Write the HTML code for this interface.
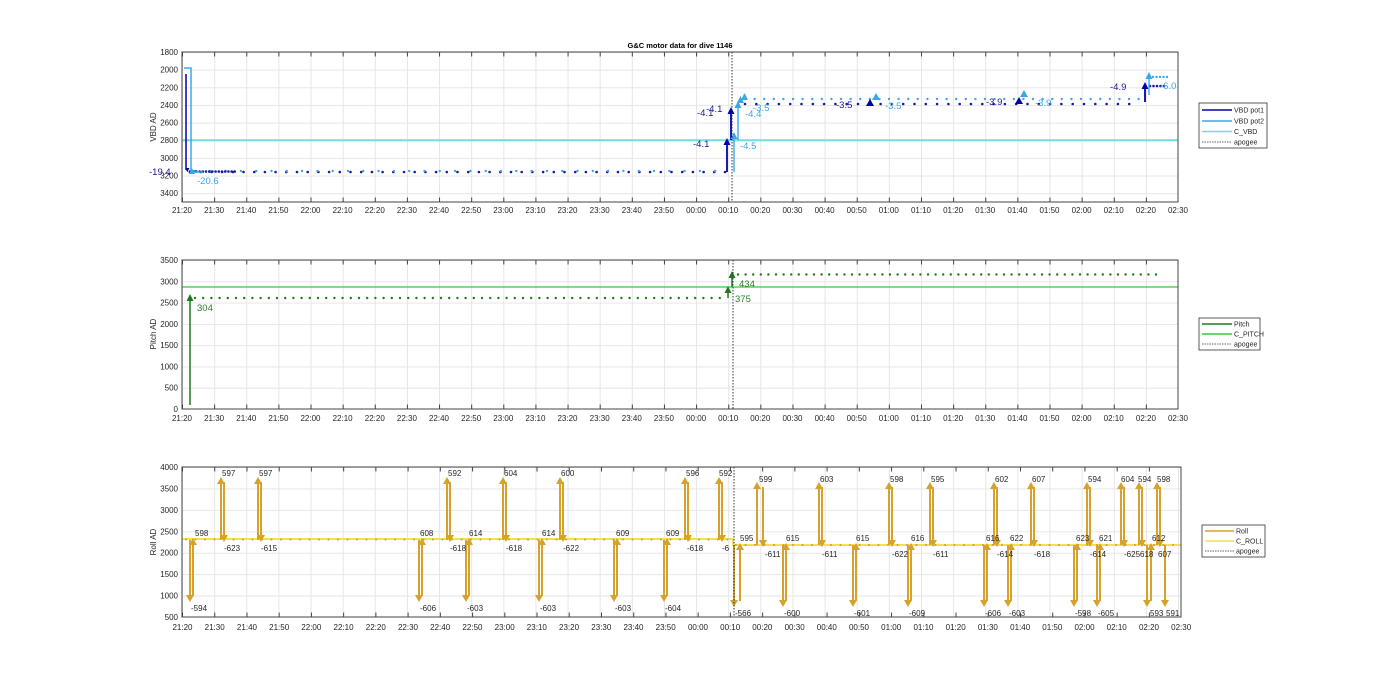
<!DOCTYPE html>
<html><head><meta charset="utf-8"><style>
html,body{margin:0;padding:0;background:#fff}
svg{display:block}
text{font-family:"Liberation Sans",sans-serif;font-size:8px;fill:#262626}
.xl text{text-anchor:middle}
.yl text{text-anchor:end}
.lg text{font-size:7px}
</style></head><body>
<svg width="1400" height="693" viewBox="0 0 1400 693" xmlns="http://www.w3.org/2000/svg">
<defs>
<pattern id="gx" x="182" y="0" width="32.13" height="10" patternUnits="userSpaceOnUse"><line x1="0.5" y1="0" x2="0.5" y2="10" stroke="#e6e6e6" stroke-width="1"/></pattern>
<pattern id="gy1" x="0" y="52" width="10" height="17.65" patternUnits="userSpaceOnUse"><line x1="0" y1="0.5" x2="10" y2="0.5" stroke="#e6e6e6"/></pattern>
<pattern id="gy2" x="0" y="260" width="10" height="21.29" patternUnits="userSpaceOnUse"><line x1="0" y1="0.5" x2="10" y2="0.5" stroke="#e6e6e6"/></pattern>
<pattern id="gy3" x="0" y="467" width="10" height="21.43" patternUnits="userSpaceOnUse"><line x1="0" y1="0.5" x2="10" y2="0.5" stroke="#e6e6e6"/></pattern>
<marker id="mb" viewBox="0 0 10 10" refX="5" refY="8" markerWidth="3" markerHeight="3.5" orient="auto"><path d="M0,0 L10,5 L0,10Z" fill="#0000B0"/></marker>
</defs>

<text x="680" y="48" text-anchor="middle" style="font-weight:bold;font-size:7.5px;fill:#000">G&amp;C motor data for dive 1146</text>

<!-- ========== AXES 1 VBD ========== -->
<rect x="182" y="52" width="996" height="150" fill="#fff"/>
<rect x="182" y="52" width="996" height="150" fill="url(#gx)"/>
<rect x="182" y="52" width="996" height="150" fill="url(#gy1)"/>
<line x1="182" y1="140.2" x2="1178" y2="140.2" stroke="#6EDDE0" stroke-width="2"/>
<path d="M190 172 L726 172" stroke="#1a1aa0" stroke-width="2.6" stroke-linecap="round" stroke-dasharray="0 10.7"/>
<path d="M195 171 L726 171" stroke="#3aa8e8" stroke-width="2.4" stroke-linecap="round" stroke-dasharray="0 15.3"/>
<path d="M190 171.5 L235 171.5" stroke="#1a1aa0" stroke-width="2.6" stroke-linecap="round" stroke-dasharray="0 3.2"/>
<path d="M745 104 L1140 104" stroke="#1a1aa0" stroke-width="2.6" stroke-linecap="round" stroke-dasharray="0 11.3"/>
<path d="M745 99 L1140 99" stroke="#3aa8e8" stroke-width="2.4" stroke-linecap="round" stroke-dasharray="0 9.6"/>
<path d="M1150 86 L1165 86" stroke="#1a1aa0" stroke-width="2.6" stroke-linecap="round" stroke-dasharray="0 3.5"/>
<path d="M1153 77 L1170 77" stroke="#3aa8e8" stroke-width="2.4" stroke-linecap="round" stroke-dasharray="0 3.5"/>
<line x1="186" y1="74" x2="186" y2="170" stroke="#0000B0" stroke-width="1.5" marker-end="url(#mb)"/>
<polyline points="184,68 191,68 191,172 203,172" fill="none" stroke="#3aa8e8" stroke-width="1.5"/>
<path d="M189,174 l3,-6 l3,6z" fill="#3aa8e8"/>
<text x="149" y="175" style="fill:#1a1a9a;font-size:9.5px">-19.4</text>
<text x="197" y="184" style="fill:#3aa8e8;font-size:9.5px">-20.6</text>
<line x1="727" y1="172" x2="727" y2="144" stroke="#0000B0" stroke-width="1.8"/><path d="M723.5,145 l3.5,-7 l3.5,7z" fill="#0000B0"/>
<line x1="731" y1="140" x2="731" y2="113" stroke="#0000B0" stroke-width="1.8"/><path d="M727.5,114 l3.5,-7 l3.5,7z" fill="#0000B0"/>
<line x1="734" y1="172" x2="734" y2="138" stroke="#3aa8e8" stroke-width="1.4"/><path d="M730.5,139 l3.5,-7 l3.5,7z" fill="#3aa8e8"/>
<line x1="738" y1="140" x2="738" y2="107" stroke="#3aa8e8" stroke-width="1.4"/><path d="M734.5,108 l3.5,-7 l3.5,7z" fill="#3aa8e8"/>
<path d="M737,103 l3.5,-7 l3.5,7z" fill="#3aa8e8"/><path d="M741,100 l3.5,-7 l3.5,7z" fill="#3aa8e8"/>
<text x="693" y="147" style="fill:#1a1a9a;font-size:9.5px">-4.1</text>
<text x="697" y="116" style="fill:#1a1a9a;font-size:9.5px">-4.1</text>
<text x="706" y="112" style="fill:#1a1a9a;font-size:9.5px">-4.1</text>
<text x="740" y="149" style="fill:#3aa8e8;font-size:9.5px">-4.5</text>
<text x="745" y="117" style="fill:#3aa8e8;font-size:9.5px">-4.4</text>
<text x="753" y="111" style="fill:#3aa8e8;font-size:9.5px">-3.5</text>
<text x="836" y="108" style="fill:#1a1a9a;font-size:9.5px">-3.5</text>
<path d="M866,106 l4,-7 l4,7z" fill="#0000B0"/><path d="M872,100 l4,-7 l4,7z" fill="#3aa8e8"/>
<text x="885" y="109" style="fill:#3aa8e8;font-size:9.5px">-3.5</text>
<text x="986" y="105" style="fill:#1a1a9a;font-size:9.5px">-3.9</text>
<path d="M1015,104 l4,-7 l4,7z" fill="#0000B0"/><path d="M1020,97 l4,-7 l4,7z" fill="#3aa8e8"/>
<text x="1035" y="106" style="fill:#3aa8e8;font-size:9.5px">-3.9</text>
<text x="1110" y="90" style="fill:#1a1a9a;font-size:9.5px">-4.9</text>
<line x1="1145" y1="102" x2="1145" y2="88" stroke="#0000B0" stroke-width="1.8"/><path d="M1141.5,89 l3.5,-7 l3.5,7z" fill="#0000B0"/>
<line x1="1149" y1="95" x2="1149" y2="78" stroke="#3aa8e8" stroke-width="1.4"/><path d="M1145.5,79 l3.5,-7 l3.5,7z" fill="#3aa8e8"/>
<text x="1160" y="89" style="fill:#3aa8e8;font-size:9.5px">-6.0</text>
<line x1="732" y1="52" x2="732" y2="202" stroke="#333" stroke-width="1" stroke-dasharray="1.5 1.5"/>
<line x1="182" y1="54" x2="1178" y2="54" stroke="#444" stroke-width="5" stroke-dasharray="1 31.13"/>
<line x1="182" y1="200" x2="1178" y2="200" stroke="#444" stroke-width="5" stroke-dasharray="1 31.13"/>
<rect x="182" y="52" width="996" height="150" fill="none" stroke="#444" stroke-width="1"/>
<g class="yl"><text x="178" y="55">1800</text><text x="178" y="72.6">2000</text><text x="178" y="90.3">2200</text><text x="178" y="107.9">2400</text><text x="178" y="125.6">2600</text><text x="178" y="143.2">2800</text><text x="178" y="160.9">3000</text><text x="178" y="178.5">3200</text><text x="178" y="196.2">3400</text></g>
<text transform="translate(156,127) rotate(-90)" text-anchor="middle">VBD AD</text>
<g class="xl" transform="translate(0,213)">
<text x="182">21:20</text><text x="214.1">21:30</text><text x="246.3">21:40</text><text x="278.4">21:50</text><text x="310.5">22:00</text><text x="342.6">22:10</text><text x="374.8">22:20</text><text x="406.9">22:30</text><text x="439">22:40</text><text x="471.2">22:50</text><text x="503.3">23:00</text><text x="535.4">23:10</text><text x="567.5">23:20</text><text x="599.7">23:30</text><text x="631.8">23:40</text><text x="663.9">23:50</text><text x="696.1">00:00</text><text x="728.2">00:10</text><text x="760.3">00:20</text><text x="792.5">00:30</text><text x="824.6">00:40</text><text x="856.7">00:50</text><text x="888.8">01:00</text><text x="921">01:10</text><text x="953.1">01:20</text><text x="985.2">01:30</text><text x="1017.4">01:40</text><text x="1049.5">01:50</text><text x="1081.6">02:00</text><text x="1113.7">02:10</text><text x="1145.9">02:20</text><text x="1178">02:30</text></g>
<g class="lg"><rect x="1199" y="103" width="68" height="45" fill="#fff" stroke="#333" stroke-width="0.8"/>
<line x1="1202" y1="110" x2="1232" y2="110" stroke="#0000B0" stroke-width="1.5"/><text x="1234" y="112.5">VBD pot1</text>
<line x1="1202" y1="121" x2="1232" y2="121" stroke="#3aa8e8" stroke-width="1.5"/><text x="1234" y="123.5">VBD pot2</text>
<line x1="1202" y1="131.5" x2="1232" y2="131.5" stroke="#6EDDE0" stroke-width="1.5"/><text x="1234" y="134">C_VBD</text>
<line x1="1202" y1="142" x2="1232" y2="142" stroke="#333" stroke-width="0.8" stroke-dasharray="1.5 1"/><text x="1234" y="144.5">apogee</text></g>

<!-- ========== AXES 2 PITCH ========== -->
<rect x="182" y="260" width="996" height="149" fill="url(#gx)"/>
<rect x="182" y="260" width="996" height="149" fill="url(#gy2)"/>
<line x1="182" y1="287" x2="1178" y2="287" stroke="#33CC33" stroke-width="1.2"/>
<path d="M195 298 L725 298" stroke="#1f7a1f" stroke-width="2.4" stroke-linecap="round" stroke-dasharray="0 8.2"/>
<path d="M738 274.5 L1163 274.5" stroke="#1f7a1f" stroke-width="2.4" stroke-linecap="round" stroke-dasharray="0 7.6"/>
<line x1="190" y1="405" x2="190" y2="300" stroke="#1f7a1f" stroke-width="1.5"/><path d="M186.5,301 l3.5,-7 l3.5,7z" fill="#1f7a1f"/>
<text x="197" y="311" style="fill:#2a7a2a;font-size:9.5px">304</text>
<line x1="728" y1="298" x2="728" y2="291" stroke="#1f7a1f" stroke-width="1.5"/><path d="M724.5,293 l3.5,-7 l3.5,7z" fill="#1f7a1f"/>
<line x1="732" y1="287" x2="732" y2="277" stroke="#1f7a1f" stroke-width="1.5"/><path d="M728.5,278 l3.5,-7 l3.5,7z" fill="#1f7a1f"/>
<text x="735" y="302" style="fill:#2a7a2a;font-size:9.5px">375</text>
<text x="739" y="287" style="fill:#2a7a2a;font-size:9.5px">434</text>
<line x1="733" y1="260" x2="733" y2="409" stroke="#333" stroke-width="1" stroke-dasharray="1.5 1.5"/>
<line x1="182" y1="262" x2="1178" y2="262" stroke="#444" stroke-width="5" stroke-dasharray="1 31.13"/>
<line x1="182" y1="407" x2="1178" y2="407" stroke="#444" stroke-width="5" stroke-dasharray="1 31.13"/>
<rect x="182" y="260" width="996" height="149" fill="none" stroke="#444" stroke-width="1"/>
<g class="yl"><text x="178" y="263">3500</text><text x="178" y="284.3">3000</text><text x="178" y="305.6">2500</text><text x="178" y="326.9">2000</text><text x="178" y="348.1">1500</text><text x="178" y="369.4">1000</text><text x="178" y="390.7">500</text><text x="178" y="412">0</text></g>
<text transform="translate(156,334) rotate(-90)" text-anchor="middle">Pitch AD</text>
<g class="xl" transform="translate(0,421)">
<text x="182">21:20</text><text x="214.1">21:30</text><text x="246.3">21:40</text><text x="278.4">21:50</text><text x="310.5">22:00</text><text x="342.6">22:10</text><text x="374.8">22:20</text><text x="406.9">22:30</text><text x="439">22:40</text><text x="471.2">22:50</text><text x="503.3">23:00</text><text x="535.4">23:10</text><text x="567.5">23:20</text><text x="599.7">23:30</text><text x="631.8">23:40</text><text x="663.9">23:50</text><text x="696.1">00:00</text><text x="728.2">00:10</text><text x="760.3">00:20</text><text x="792.5">00:30</text><text x="824.6">00:40</text><text x="856.7">00:50</text><text x="888.8">01:00</text><text x="921">01:10</text><text x="953.1">01:20</text><text x="985.2">01:30</text><text x="1017.4">01:40</text><text x="1049.5">01:50</text><text x="1081.6">02:00</text><text x="1113.7">02:10</text><text x="1145.9">02:20</text><text x="1178">02:30</text></g>
<g class="lg"><rect x="1199" y="318" width="61" height="32" fill="#fff" stroke="#333" stroke-width="0.8"/>
<line x1="1202" y1="324" x2="1232" y2="324" stroke="#1f7a1f" stroke-width="1.5"/><text x="1234" y="326.5">Pitch</text>
<line x1="1202" y1="334" x2="1232" y2="334" stroke="#33CC33" stroke-width="1.5"/><text x="1234" y="336.5">C_PITCH</text>
<line x1="1202" y1="344" x2="1232" y2="344" stroke="#333" stroke-width="0.8" stroke-dasharray="1.5 1"/><text x="1234" y="346.5">apogee</text></g>

<!-- ========== AXES 3 ROLL ========== -->
<rect x="182" y="467" width="999" height="150" fill="url(#gx)"/>
<rect x="182" y="467" width="999" height="150" fill="url(#gy3)"/>
<polyline points="182,539 733,539 733,545 1181,545" fill="none" stroke="#F2E24A" stroke-width="2"/>
<path d="M186 539.5 L730 539.5" stroke="#C8A040" stroke-width="2" stroke-linecap="round" stroke-dasharray="0 9.5"/>
<path d="M736 545 L1178 545" stroke="#C8A040" stroke-width="2" stroke-linecap="round" stroke-dasharray="0 9.5"/>
<g stroke="#D6A22A" stroke-width="2" fill="none">
<path d="M221 540V482M224 482V536"/>
<path d="M258 540V482M261 482V536"/>
<path d="M447 540V482M450 482V536"/>
<path d="M503 540V482M506 482V536"/>
<path d="M560 540V482M563 482V536"/>
<path d="M685 540V482M688 482V536"/>
<path d="M719 540V482M722 482V536"/>
<path d="M757 545V487M763 487V541"/>
<path d="M819 545V487M822 487V541"/>
<path d="M889 545V487M892 487V541"/>
<path d="M930 545V487M933 487V541"/>
<path d="M994 545V487M997 487V541"/>
<path d="M1031 545V487M1034 487V541"/>
<path d="M1087 545V487M1090 487V541"/>
<path d="M1121 545V487M1124 487V541"/>
<path d="M1139 545V487M1142 487V541"/>
<path d="M1157 545V487M1160 487V541"/>
<path d="M190 540V596M193 596V544"/>
<path d="M419 540V596M422 596V544"/>
<path d="M466 540V596M469 596V544"/>
<path d="M539 540V596M542 596V544"/>
<path d="M614 540V596M617 596V544"/>
<path d="M664 540V596M667 596V544"/>
<path d="M734 545V601M740 601V549"/>
<path d="M783 545V601M786 601V549"/>
<path d="M853 545V601M856 601V549"/>
<path d="M908 545V601M911 601V549"/>
<path d="M984 545V601M987 601V549"/>
<path d="M1008 545V601M1011 601V549"/>
<path d="M1074 545V601M1077 601V549"/>
<path d="M1097 545V601M1100 601V549"/>
<path d="M1147 545V601M1151 601V549"/>
<path d="M1165 545V601"/>
</g>
<g fill="#D6A22A">
<path d="M217,484 l4,-7 l4,7zM254,484 l4,-7 l4,7zM443,484 l4,-7 l4,7zM499,484 l4,-7 l4,7zM556,484 l4,-7 l4,7zM681,484 l4,-7 l4,7zM715,484 l4,-7 l4,7zM753,489 l4,-7 l4,7zM815,489 l4,-7 l4,7zM885,489 l4,-7 l4,7zM926,489 l4,-7 l4,7zM990,489 l4,-7 l4,7zM1027,489 l4,-7 l4,7zM1083,489 l4,-7 l4,7zM1117,489 l4,-7 l4,7zM1135,489 l4,-7 l4,7zM1153,489 l4,-7 l4,7z"/>
<path d="M220,535 l4,7 l4,-7zM257,535 l4,7 l4,-7zM446,535 l4,7 l4,-7zM502,535 l4,7 l4,-7zM559,535 l4,7 l4,-7zM684,535 l4,7 l4,-7zM718,535 l4,7 l4,-7zM759,540 l4,7 l4,-7zM818,540 l4,7 l4,-7zM888,540 l4,7 l4,-7zM929,540 l4,7 l4,-7zM993,540 l4,7 l4,-7zM1030,540 l4,7 l4,-7zM1086,540 l4,7 l4,-7zM1120,540 l4,7 l4,-7zM1138,540 l4,7 l4,-7zM1156,540 l4,7 l4,-7z"/>
<path d="M186,595 l4,7 l4,-7zM415,595 l4,7 l4,-7zM462,595 l4,7 l4,-7zM535,595 l4,7 l4,-7zM610,595 l4,7 l4,-7zM660,595 l4,7 l4,-7zM730,600 l4,7 l4,-7zM779,600 l4,7 l4,-7zM849,600 l4,7 l4,-7zM904,600 l4,7 l4,-7zM980,600 l4,7 l4,-7zM1004,600 l4,7 l4,-7zM1070,600 l4,7 l4,-7zM1093,600 l4,7 l4,-7zM1143,600 l4,7 l4,-7zM1161,600 l4,7 l4,-7z"/>
<path d="M189,545 l4,-7 l4,7zM418,545 l4,-7 l4,7zM465,545 l4,-7 l4,7zM538,545 l4,-7 l4,7zM613,545 l4,-7 l4,7zM663,545 l4,-7 l4,7zM736,550 l4,-7 l4,7zM782,550 l4,-7 l4,7zM852,550 l4,-7 l4,7zM907,550 l4,-7 l4,7zM983,550 l4,-7 l4,7zM1007,550 l4,-7 l4,7zM1073,550 l4,-7 l4,7zM1096,550 l4,-7 l4,7zM1147,550 l4,-7 l4,7z"/>
</g>
<g style="font-size:9.5px">
<text x="222" y="476" fill="#D6A22A">597</text><text x="259" y="476" fill="#D6A22A">597</text><text x="448" y="476" fill="#D6A22A">592</text><text x="504" y="476" fill="#D6A22A">604</text><text x="561" y="476" fill="#D6A22A">600</text><text x="686" y="476" fill="#D6A22A">596</text><text x="719" y="476" fill="#D6A22A">592</text><text x="759" y="482" fill="#D6A22A">599</text><text x="820" y="482" fill="#D6A22A">603</text><text x="890" y="482" fill="#D6A22A">598</text><text x="931" y="482" fill="#D6A22A">595</text><text x="995" y="482" fill="#D6A22A">602</text><text x="1032" y="482" fill="#D6A22A">607</text><text x="1088" y="482" fill="#D6A22A">594</text><text x="1121" y="482" fill="#D6A22A">604</text><text x="1138" y="482" fill="#D6A22A">594</text><text x="1157" y="482" fill="#D6A22A">598</text>
<text x="224" y="551" fill="#D6A22A">-623</text><text x="261" y="551" fill="#D6A22A">-615</text><text x="450" y="551" fill="#D6A22A">-618</text><text x="506" y="551" fill="#D6A22A">-618</text><text x="563" y="551" fill="#D6A22A">-622</text><text x="687" y="551" fill="#D6A22A">-618</text><text x="722" y="551" fill="#D6A22A">-6</text><text x="765" y="557" fill="#D6A22A">-611</text><text x="822" y="557" fill="#D6A22A">-611</text><text x="892" y="557" fill="#D6A22A">-622</text><text x="933" y="557" fill="#D6A22A">-611</text><text x="997" y="557" fill="#D6A22A">-614</text><text x="1034" y="557" fill="#D6A22A">-618</text><text x="1090" y="557" fill="#D6A22A">-614</text><text x="1124" y="557" fill="#D6A22A">-625</text><text x="1140" y="557" fill="#D6A22A">618</text><text x="1158" y="557" fill="#D6A22A">607</text>
<text x="191" y="611" fill="#D6A22A">-594</text><text x="420" y="611" fill="#D6A22A">-606</text><text x="467" y="611" fill="#D6A22A">-603</text><text x="540" y="611" fill="#D6A22A">-603</text><text x="615" y="611" fill="#D6A22A">-603</text><text x="665" y="611" fill="#D6A22A">-604</text><text x="735" y="616" fill="#D6A22A">-566</text><text x="784" y="616" fill="#D6A22A">-600</text><text x="854" y="616" fill="#D6A22A">-601</text><text x="909" y="616" fill="#D6A22A">-609</text><text x="985" y="616" fill="#D6A22A">-606</text><text x="1009" y="616" fill="#D6A22A">-603</text><text x="1075" y="616" fill="#D6A22A">-598</text><text x="1098" y="616" fill="#D6A22A">-605</text><text x="1150" y="616" fill="#D6A22A">593</text><text x="1166" y="616" fill="#D6A22A">591</text>
<text x="195" y="536" fill="#D6A22A">598</text><text x="420" y="536" fill="#D6A22A">608</text><text x="469" y="536" fill="#D6A22A">614</text><text x="542" y="536" fill="#D6A22A">614</text><text x="616" y="536" fill="#D6A22A">609</text><text x="666" y="536" fill="#D6A22A">609</text><text x="740" y="541" fill="#D6A22A">595</text><text x="786" y="541" fill="#D6A22A">615</text><text x="856" y="541" fill="#D6A22A">615</text><text x="911" y="541" fill="#D6A22A">616</text><text x="986" y="541" fill="#D6A22A">616</text><text x="1010" y="541" fill="#D6A22A">622</text><text x="1076" y="541" fill="#D6A22A">623</text><text x="1099" y="541" fill="#D6A22A">621</text><text x="1152" y="541" fill="#D6A22A">612</text>
</g>
<line x1="734" y1="467" x2="734" y2="617" stroke="#333" stroke-width="1" stroke-dasharray="1.5 1.5"/>
<line x1="182" y1="469" x2="1181" y2="469" stroke="#444" stroke-width="5" stroke-dasharray="1 31.23"/>
<line x1="182" y1="615" x2="1181" y2="615" stroke="#444" stroke-width="5" stroke-dasharray="1 31.23"/>
<rect x="182" y="467" width="999" height="150" fill="none" stroke="#444" stroke-width="1"/>
<g class="yl"><text x="178" y="470">4000</text><text x="178" y="491.4">3500</text><text x="178" y="512.9">3000</text><text x="178" y="534.3">2500</text><text x="178" y="555.7">2000</text><text x="178" y="577.1">1500</text><text x="178" y="598.6">1000</text><text x="178" y="620">500</text></g>
<text transform="translate(156,542) rotate(-90)" text-anchor="middle">Roll AD</text>
<g class="xl" transform="translate(0,630) scale(1.0027,1)">
<text x="182">21:20</text><text x="214.1">21:30</text><text x="246.3">21:40</text><text x="278.4">21:50</text><text x="310.5">22:00</text><text x="342.6">22:10</text><text x="374.8">22:20</text><text x="406.9">22:30</text><text x="439">22:40</text><text x="471.2">22:50</text><text x="503.3">23:00</text><text x="535.4">23:10</text><text x="567.5">23:20</text><text x="599.7">23:30</text><text x="631.8">23:40</text><text x="663.9">23:50</text><text x="696.1">00:00</text><text x="728.2">00:10</text><text x="760.3">00:20</text><text x="792.5">00:30</text><text x="824.6">00:40</text><text x="856.7">00:50</text><text x="888.8">01:00</text><text x="921">01:10</text><text x="953.1">01:20</text><text x="985.2">01:30</text><text x="1017.4">01:40</text><text x="1049.5">01:50</text><text x="1081.6">02:00</text><text x="1113.7">02:10</text><text x="1145.9">02:20</text><text x="1178">02:30</text></g>
<g class="lg"><rect x="1202" y="525" width="63" height="32" fill="#fff" stroke="#333" stroke-width="0.8"/>
<line x1="1205" y1="531" x2="1234" y2="531" stroke="#D6A22A" stroke-width="1.5"/><text x="1236" y="533.5">Roll</text>
<line x1="1205" y1="541" x2="1234" y2="541" stroke="#F2E24A" stroke-width="1.5"/><text x="1236" y="543.5">C_ROLL</text>
<line x1="1205" y1="551" x2="1234" y2="551" stroke="#333" stroke-width="0.8" stroke-dasharray="1.5 1"/><text x="1236" y="553.5">apogee</text></g>
</svg>
</body></html>
